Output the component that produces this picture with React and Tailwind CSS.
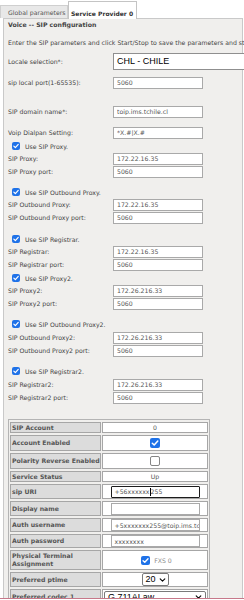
import React from 'react';

function Box({ checked, className = '' }) {
  if (!checked) {
    return <span className={`inline-block shrink-0 rounded-[2px] border border-[#858585] bg-white ${className}`}></span>;
  }
  return (
    <span className={`inline-flex shrink-0 items-center justify-center rounded-[2px] bg-[#1f72e8] ${className}`}>
      <svg viewBox="0 0 10 10" className="h-full w-full">
        <path d="M2.3 5.2 L4.2 7 L7.8 3" fill="none" stroke="white" strokeWidth="1.5" strokeLinecap="round" strokeLinejoin="round" />
      </svg>
    </span>
  );
}

function Chevron({ className = '' }) {
  return (
    <svg viewBox="0 0 10 6" className={className}>
      <path d="M1.5 1.2 L5 4.6 L8.5 1.2" fill="none" stroke="black" strokeWidth="1.6" strokeLinecap="round" strokeLinejoin="round" />
    </svg>
  );
}

function Field({ label, value, className = '' }) {
  return (
    <div className={`flex h-[13px] items-center pl-[4px] ${className}`}>
      <span className="w-[105px] shrink-0">{label}</span>
      <input
        readOnly
        value={value}
        className="h-[12px] w-[90px] border border-[#a9a9a9] bg-white px-[3px] text-[#555] outline-none"
      />
    </div>
  );
}

function CheckRow({ label, className = '' }) {
  return (
    <div className={`flex h-[12px] items-center pl-[8px] ${className}`}>
      <Box checked className="h-[8px] w-[8px]" />
      <span className="ml-[5px]">{label}</span>
    </div>
  );
}

function Row({ label, height, children }) {
  return (
    <tr>
      <td className={`w-[91px] border border-[#a6a6a6] bg-[#dcdcdc] pl-[1px] font-bold leading-[8px] text-[#555] ${height}`}>
        {label}
      </td>
      <td className={`border border-[#a6a6a6] bg-white text-center text-[#555] ${height}`}>{children}</td>
    </tr>
  );
}

const tableInput = 'mx-auto flex h-[12px] w-[89px] items-center border border-[#a9a9a9] bg-white px-[3px] text-left text-[#555] whitespace-nowrap overflow-hidden';

export default function App() {
  return (
    <div className="h-[600px] w-[244px] overflow-hidden bg-white font-['DejaVu_Sans',sans-serif] text-[6.2px] leading-[9px] text-[#444]">
      <div className="flex h-[18px] items-end">
        <div className="h-[13px] w-[68px] whitespace-nowrap border border-b-0 border-[#cfcfcf] bg-[#e8e8e8] pl-[7px] pt-[2px] text-[#555]">
          Global parameters
        </div>
        <div className="relative z-10 -mb-px h-[18px] w-[69px] whitespace-nowrap border border-b-0 border-[#c4c4c4] bg-white pl-[2px] pt-[7px] text-[6px] font-bold text-[#333]">
          Service Provider 0
        </div>
      </div>

      <div className="ml-[3px] h-[582px] w-[240px] border border-b-0 border-[#c9c9c9] bg-[#f0efed]">
        <div className="h-[12px] pl-[4px] font-bold leading-[12px]">Voice -- SIP configuration</div>
        <div className="mt-[6px] h-[12px] whitespace-nowrap pl-[4px] leading-[12px]">
          Enter the SIP parameters and click Start/Stop to save the parameters and start the service
        </div>

        <div className="mt-[4px] flex h-[17px] items-center pl-[4px]">
          <span className="w-[105px] shrink-0">Locale selection*:</span>
          <div className="flex h-[17px] w-[150px] shrink-0 items-center border border-[#8f8f8f] bg-white pl-[3px] font-['Liberation_Sans',sans-serif] text-[9px] text-black">
            CHL - CHILE
          </div>
        </div>

        <Field label="sip local port(1-65535):" value="5060" className="mt-[6px]" />
        <Field label="SIP domain name*:" value="toip.ims.tchile.cl" className="mt-[16px]" />
        <Field label="Voip Dialpan Setting:" value="*X.#|X.#" className="mt-[8px]" />

        <CheckRow label="Use SIP Proxy." className="mt-[1px]" />
        <Field label="SIP Proxy:" value="172.22.16.35" />
        <Field label="SIP Proxy port:" value="5060" />

        <CheckRow label="Use SIP Outbound Proxy." className="mt-[8px]" />
        <Field label="SIP Outbound Proxy:" value="172.22.16.35" />
        <Field label="SIP Outbound Proxy port:" value="5060" />

        <CheckRow label="Use SIP Registrar." className="mt-[9px]" />
        <Field label="SIP Registrar:" value="172.22.16.35" />
        <Field label="SIP Registrar port:" value="5060" />

        <CheckRow label="Use SIP Proxy2." className="mt-[1px]" />
        <Field label="SIP Proxy2:" value="172.26.216.33" />
        <Field label="SIP Proxy2 port:" value="5060" />

        <CheckRow label="Use SIP Outbound Proxy2." className="mt-[8px]" />
        <Field label="SIP Outbound Proxy2:" value="172.26.216.33" className="mt-[1px]" />
        <Field label="SIP Outbound Proxy2 port:" value="5060" />

        <CheckRow label="Use SIP Registrar2." className="mt-[8px]" />
        <Field label="SIP Registrar2:" value="172.26.216.33" className="mt-[1px]" />
        <Field label="SIP Registrar2 port:" value="5060" />

        <table className="ml-[4px] mt-[15px] w-[202px] border-separate border-spacing-x-[1px] border-spacing-y-[2px] border border-[#b4b4b4]">
          <tbody>
            <Row label="SIP Account" height="h-[11px]">0</Row>
            <Row label="Account Enabled" height="h-[16px]">
              <Box checked className="h-[10px] w-[10px] align-middle" />
            </Row>
            <Row label="Polarity Reverse Enabled" height="h-[16px]">
              <Box className="h-[10px] w-[10px] align-middle" />
            </Row>
            <Row label="Service Status" height="h-[11px]">Up</Row>
            <Row label="sip URI" height="h-[15px]">
              <div className="mx-auto flex h-[12px] w-[89px] items-center rounded-[1px] border-[1.5px] border-[#1c1c1c] bg-white px-[3px] text-left text-[#555]">
                +56xxxxxx<span className="inline-block h-[8px] w-px bg-black"></span>255
              </div>
            </Row>
            <Row label="Display name" height="h-[15px]">
              <div className={tableInput}></div>
            </Row>
            <Row label="Auth username" height="h-[14px]">
              <div className={tableInput}>+5xxxxxxx255@toip.ims.tchile.cl</div>
            </Row>
            <Row label="Auth password" height="h-[14px]">
              <div className={tableInput}>xxxxxxxx</div>
            </Row>
            <Row label={<>Physical Terminal<br />Assignment</>} height="h-[20px]">
              <div className="flex items-center justify-center gap-[4px] pl-[3px]">
                <Box checked className="h-[9px] w-[9px]" />
                <span className="text-[#8a8a8a]">FXS 0</span>
              </div>
            </Row>
            <Row label="Preferred ptime" height="h-[15px]">
              <div className="mx-auto flex h-[13px] w-[27px] items-center justify-between rounded-[2px] border border-[#7a7a7a] bg-white pl-[3px] pr-[2px] font-['Liberation_Sans',sans-serif] text-[9px] text-black">
                20
                <Chevron className="h-[4px] w-[7px]" />
              </div>
            </Row>
            <Row label="Preferred codec 1" height="h-[16px]">
              <div className="mx-auto flex h-[13px] w-[102px] items-center justify-between rounded-[2px] border border-[#7a7a7a] bg-white pl-[3px] pr-[3px] font-['Liberation_Sans',sans-serif] text-[9px] text-black">
                G.711ALaw
                <Chevron className="h-[4px] w-[7px]" />
              </div>
            </Row>
          </tbody>
        </table>
      </div>

      <div className="fixed left-0 top-[598px] h-[2px] w-[244px] border-t border-[#c7788a] bg-white"></div>
    </div>
  );
}
